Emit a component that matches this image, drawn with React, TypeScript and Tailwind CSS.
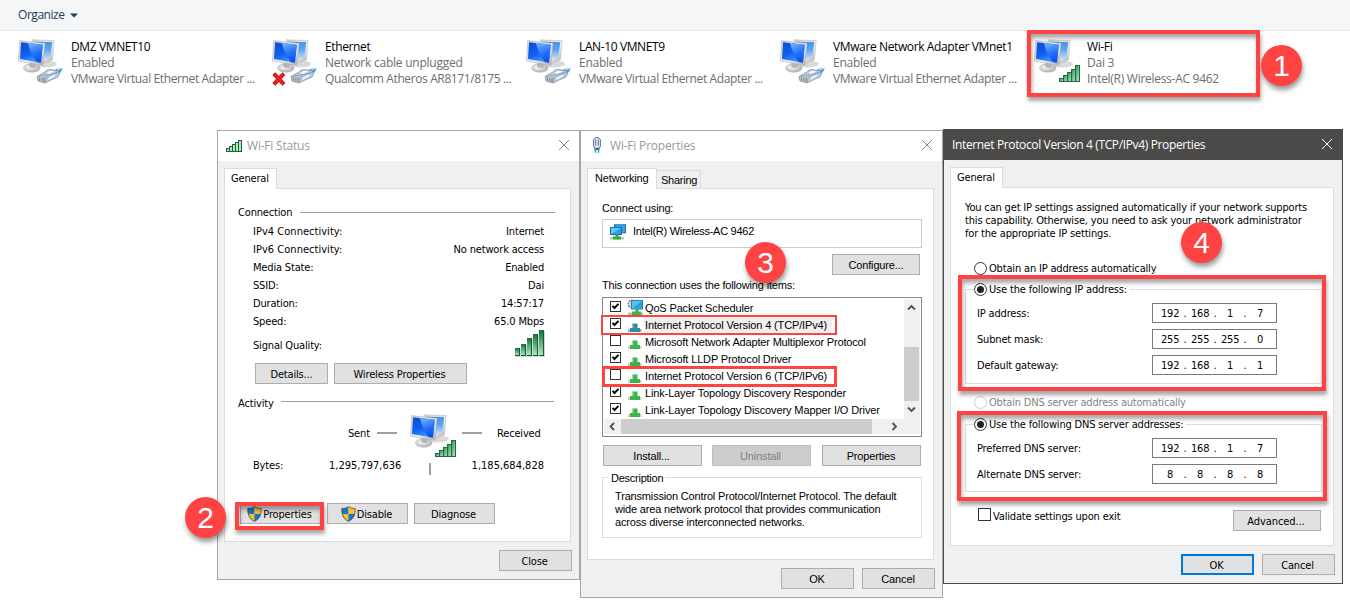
import type { ReactNode } from "react";

const tahoma = "font-['DejaVu_Sans_Condensed','DejaVu_Sans',sans-serif] text-[11px] tracking-[-0.17px] [font-stretch:condensed]";
const segoe = "font-['Open_Sans','Noto_Sans',sans-serif] text-[12px] [font-stretch:normal]";
const msSans = "font-['Liberation_Sans',Arial,sans-serif] text-[11px] tracking-[-0.15px]";

function Defs() {
  return (
    <svg className="absolute h-0 w-0" aria-hidden="true">
      <defs>
        <linearGradient id="screenFront" x1="0" y1="0" x2="0.4" y2="1">
          <stop offset="0" stopColor="#0b4fd6" />
          <stop offset="0.6" stopColor="#0f5ff0" />
          <stop offset="1" stopColor="#3c95ff" />
        </linearGradient>
        <linearGradient id="screenBack" x1="0" y1="0" x2="0" y2="1">
          <stop offset="0" stopColor="#1873e4" />
          <stop offset="1" stopColor="#b4dcff" />
        </linearGradient>
        <linearGradient id="gloss" x1="0" y1="0" x2="0.3" y2="1">
          <stop offset="0" stopColor="#7ab8ff" />
          <stop offset="0.6" stopColor="#2673fa" />
          <stop offset="1" stopColor="#0c55ea" />
        </linearGradient>
        <linearGradient id="bezel" x1="0" y1="0" x2="1" y2="1">
          <stop offset="0" stopColor="#d2d2d2" />
          <stop offset="0.6" stopColor="#ececec" />
          <stop offset="1" stopColor="#a6a6a6" />
        </linearGradient>
        <radialGradient id="base" cx="0.4" cy="0.4" r="0.6">
          <stop offset="0" stopColor="#ffffff" />
          <stop offset="1" stopColor="#b0b0b0" />
        </radialGradient>
        <linearGradient id="bar" x1="0" y1="0" x2="1" y2="1">
          <stop offset="0" stopColor="#2a8a50" />
          <stop offset="1" stopColor="#bfe8cc" />
        </linearGradient>
        <linearGradient id="barTall" x1="0" y1="0" x2="0" y2="1">
          <stop offset="0" stopColor="#11703a" />
          <stop offset="1" stopColor="#b5ecc6" />
        </linearGradient>
      </defs>
    </svg>
  );
}

function Bars() {
  return (
    <g stroke="#1f6b40" strokeWidth="1" fill="url(#bar)">
      <rect x="25.5" y="39.5" width="4" height="3" />
      <rect x="29.5" y="36.5" width="4" height="6" />
      <rect x="33.5" y="33.5" width="4" height="9" />
      <rect x="37.5" y="30.5" width="4" height="12" />
      <rect x="41.5" y="26.5" width="4" height="16" />
    </g>
  );
}

function Plug() {
  return (
    <g>
      <path d="M35 32 L39 29.8 L45 29 L43.5 32 L40 36Z" fill="#35a6d6" />
      <path d="M39 31 L45 29.2" stroke="#bfeaf7" strokeWidth="1" />
      <path d="M19 37.5 L27 33 L29 31 L33 30.5 L40 32 L42 34 L40 38 L33 41 L27 44 L20 42Z" fill="#bccbe2" stroke="#7f8fae" strokeWidth="0.8" />
      <path d="M20 37.5 L30 35.5 L41 33.5 M27 44 L28 38.5 L39 33.5" stroke="#7f8fae" strokeWidth="0.7" fill="none" />
      <path d="M28.5 34 L32 31.5 L36.5 32.5 L31 35Z" fill="#f5f9ff" />
      <path d="M21.5 38.5V41.5M23.8 38.5V42.5M26 38.5V43" stroke="#8f8a4c" strokeWidth="1.1" />
      <path d="M30.5 38.3 L37 35.3 L37 37.5 L30.5 41Z" fill="#e9f1fb" />
    </g>
  );
}

function Computers({ kind, broken }: { kind: "plug" | "bars"; broken?: boolean }) {
  return (
    <svg width="46" height="46" viewBox="0 0 46 46" className="shrink-0 overflow-visible" fill="none">
      <ellipse cx="28" cy="25" rx="11" ry="3.4" fill="#d9d9d9" />
      <path d="M14 0.8 L36.2 1.6 L34.4 20.8 L24 25Z" fill="url(#bezel)" stroke="#b4b4b4" strokeWidth="0.5" />
      <path d="M16.5 2.8 L34 3.2 L32.4 18.3 L25 19.5Z" fill="url(#screenBack)" />
      <path d="M25 3 L34 3.2 L33 13 C29 11 27 8 25 3Z" fill="#5fa7f2" opacity="0.6" />
      <ellipse cx="13.8" cy="29" rx="8.3" ry="4.2" fill="url(#base)" stroke="#b8b8b8" strokeWidth="0.6" />
      <path d="M11 23 L18 24.5 L17 29 L11.5 28.5Z" fill="#b4b4b4" />
      <path d="M1.7 1.6 L27 4.2 L24.8 26.3 L0.4 22Z" fill="url(#bezel)" stroke="#acacac" strokeWidth="0.5" />
      <path d="M3.1 3.3 L24.8 5.7 L22.9 23.7 L2 20Z" fill="url(#screenFront)" />
      <path d="M10 4.1 L24.8 5.7 L22.9 23.7 L18.5 22.9 C14 17 11.5 11 10 4.1Z" fill="url(#gloss)" />
      {kind === "plug" ? <Plug /> : <Bars />}
      {broken && (
        <>
          <path d="M3.2 36 L10.6 44 M10.6 36 L3.2 44" stroke="#b80606" strokeWidth="4" strokeLinecap="square" />
          <path d="M3.2 36 L10.6 44 M10.6 36 L3.2 44" stroke="#ee2222" strokeWidth="2.4" strokeLinecap="square" />
        </>
      )}
    </svg>
  );
}

function Adapter({ name, status, device, kind = "plug", broken }: { name: string; status: string; device: string; kind?: "plug" | "bars"; broken?: boolean }) {
  return (
    <div className="flex w-[254px] shrink-0 gap-[7px]">
      <Computers kind={kind} broken={broken} />
      <div className="whitespace-nowrap leading-4 text-[#6d6d6d]">
        <div className="text-black">{name}</div>
        <div className="tracking-[-0.24px]">{status}</div>
        <div className={kind === "bars" ? "tracking-[-0.28px]" : ""}>{device}</div>
      </div>
    </div>
  );
}

function CloseX({ color }: { color: string }) {
  return (
    <svg width="11" height="11" viewBox="0 0 11 11" stroke={color} strokeWidth="1" className="-mt-[2px] overflow-visible">
      <path d="M0 0 L10 10 M10 0 L0 10" />
    </svg>
  );
}

function Button({ children, className = "", variant = "normal" }: { children: ReactNode; className?: string; variant?: "normal" | "disabled" | "default" }) {
  const look =
    variant === "disabled"
      ? "border border-[#bfbfbf] bg-[#cccccc] text-[#838383]"
      : variant === "default"
        ? "border-2 border-[#0078d7] bg-[#e1e1e1]"
        : "border border-[#adadad] bg-[#e1e1e1]";
  return (
    <button className={`flex h-[21px] shrink-0 items-center justify-center whitespace-nowrap leading-[17px] ${look} ${className}`}>
      {children}
    </button>
  );
}

function Shield() {
  return (
    <svg width="15" height="16" viewBox="0 0 15 16" className="-ml-[2px] -mt-px mr-px">
      <path d="M7.5 0.5 C5.5 2 3 2.5 0.8 2.4 C0.6 8 2 12.5 7.5 15.5Z" fill="#1874cd" />
      <path d="M7.5 0.5 C9.5 2 12 2.5 14.2 2.4 C14.4 8 13 12.5 7.5 15.5Z" fill="#f9c02d" />
      <path d="M7.5 8 H1.1 C1.8 11.2 3.8 13.7 7.5 15.5Z" fill="#f9c02d" />
      <path d="M7.5 8 H13.9 C13.2 11.2 11.2 13.7 7.5 15.5Z" fill="#1874cd" />
      <path d="M7.5 0.6 C5.5 2 3 2.6 0.8 2.4 C0.6 8 2 12.5 7.5 15.4 C13 12.5 14.4 8 14.2 2.4 C12 2.6 9.5 2 7.5 0.6Z" fill="none" stroke="#4d5560" strokeWidth="0.9" />
    </svg>
  );
}

function StatusRow({ label, value }: { label: string; value?: string }) {
  return (
    <div className="flex h-[18px] items-center justify-between pt-[2px] leading-4">
      <span className={label.startsWith("IPv") ? "tracking-[0.03px]" : ""}>{label}</span>
      <span>{value}</span>
    </div>
  );
}

const status = [
  ["IPv4 Connectivity:", "Internet"],
  ["IPv6 Connectivity:", "No network access"],
  ["Media State:", "Enabled"],
  ["SSID:", "Dai"],
  ["Duration:", "14:57:17"],
  ["Speed:", "65.0 Mbps"],
];

function StatusDialog() {
  return (
    <section className={`flex h-[450px] w-[363px] shrink-0 flex-col border border-[#a6a6a6] bg-[#f0f0f0] ${tahoma}`}>
      <header className="flex h-[30px] shrink-0 items-center bg-white pl-2 pr-[9px] text-[#999]">
        <svg width="16" height="12" viewBox="0 0 16 12" fill="#9ff0b8" stroke="#2c5b3c" className="-mt-px">
          <rect x="0.5" y="8.5" width="3" height="3" />
          <rect x="3.5" y="6.5" width="3" height="5" />
          <rect x="6.5" y="4.5" width="3" height="7" />
          <rect x="9.5" y="2.5" width="3" height="9" />
          <rect x="12.5" y="0.5" width="3" height="11" />
        </svg>
        <h2 className={`ml-[5px] grow tracking-[-0.2px] ${segoe}`}>Wi-Fi Status</h2>
        <CloseX color="#8a8a8a" />
      </header>
      <div className="mx-[6px] mt-[7px] flex">
        <div className="z-10 -mb-px h-[21px] w-[53px] border border-b-0 border-[#dcdcdc] bg-white pl-[6px] leading-[19px]">General</div>
      </div>
      <div className="ml-[6px] flex h-[354px] w-[347px] shrink-0 flex-col border border-[#dcdcdc] bg-white pl-[13px] pr-[15px] pt-[15px]">
        <div className="flex h-4 items-center justify-between">
          <span className="pt-[2px]">Connection</span> <span className="h-px w-[255px] bg-[#a0a0a0]" />
        </div>
        <div className="ml-[15px] mr-[11px] mt-[2px]">
          {status.map(([l, v]) => <StatusRow key={l} label={l} value={v} />)}
          <div className="flex h-[27px] justify-between">
            <span className="mt-[8px] leading-4">Signal Quality:</span>
            <svg width="31" height="27" viewBox="0 0 31 27" className="-mr-px">
              <g fill="#c9d8cd">
                <rect x="2" y="19" width="5" height="8" />
                <rect x="8" y="15" width="5" height="12" />
                <rect x="14" y="9" width="5" height="18" />
                <rect x="20" y="5" width="5" height="22" />
                <rect x="26" y="1" width="5" height="26" />
              </g>
              <g fill="url(#barTall)">
                <rect x="1" y="18" width="5" height="8" />
                <rect x="7" y="14" width="5" height="12" />
                <rect x="13" y="8" width="5" height="18" />
                <rect x="19" y="4" width="5" height="22" />
                <rect x="25" y="0" width="5" height="26" />
              </g>
              <path d="M1 25.5H6M7 25.5H12M13 25.5H18M19 25.5H24M25 25.5H30M5.5 18V26M11.5 14V26M17.5 8V26M23.5 4V26M29.5 0V26" stroke="#125a30" />
            </svg>
          </div>
        </div>
        <div className="ml-[17px] mt-[6px] flex gap-[6px]">
          <Button className="w-[73px] pt-[2px]">Details...</Button>
          <Button className="w-[133px] pr-[2px] pt-[2px] tracking-[-0.12px]">Wireless Properties</Button>
        </div>
        <div className="mt-[11px] flex h-4 items-center justify-between">
          <span className="pt-[2px]">Activity</span> <span className="mb-[3px] mr-px h-px w-[273px] bg-[#a0a0a0]" />
        </div>
        <div className="mt-[3px] flex h-[46px] items-start pl-[110px]">
          <span className="mt-[12px] w-[29px] leading-4">Sent</span>
          <span className="mt-[18px] h-[2px] w-5 bg-[#a0a0a0]" />
          <span className="ml-[13px] mr-[6px] h-[46px] w-[46px]"><Computers kind="bars" /></span>
          <span className="mt-[18px] h-[2px] w-5 bg-[#a0a0a0]" />
          <span className="ml-[15px] mt-[12px] leading-4">Received</span>
        </div>
        <div className="-mt-[2px] ml-[15px] mr-[11px] flex h-4 items-center">
          <span className="w-[76px]">Bytes:</span>
          <span className="w-[100px] tracking-[0px]">1,295,797,636</span>
          <span className="mt-[5px] h-3 w-[2px] bg-[#a0a0a0]" />
          <span className="ml-auto tracking-[0px]">1,185,684,828</span>
        </div>
        <div className="ml-[2px] mt-[29px] flex gap-[6px]">
          <Button className="w-[81px] pt-[2px]"><Shield />Properties</Button>
          <Button className="w-[81px] pt-[2px]"><Shield />Disable</Button>
          <Button className="w-[81px] pr-[2px] pt-[2px]">Diagnose</Button>
        </div>
      </div>
      <Button className="ml-auto mr-[7px] mt-2 w-[73px] pr-[2px] pt-[2px]">Close</Button>
    </section>
  );
}

function Check({ on }: { on: boolean }) {
  return (
    <svg width="11" height="11" viewBox="0 0 11 11" className="mb-[2px] shrink-0">
      <rect x="0.5" y="0.5" width="10" height="10" fill="#fff" stroke="#333" />
      {on && <path d="M2.5 4.8 L4.5 7 L8.5 2.8" fill="none" stroke="#000" strokeWidth="1.9" />}
    </svg>
  );
}

function ProtocolIcon({ kind }: { kind: string }) {
  if (kind === "qos")
    return (
      <svg width="17" height="17" viewBox="0 0 17 17" className="shrink-0">
        <circle cx="5" cy="5" r="3.8" fill="#d6d6d6" stroke="#777" strokeWidth="1.6" strokeDasharray="1.6 1.2" />
        <rect x="4.5" y="1.5" width="11" height="8.5" fill="#55c0f5" stroke="#2a7fb5" />
        <path d="M5 9.5 L15 2 V9.5Z" fill="#2b9fe0" />
        <path d="M8.5 10h3v3h-3z" fill="#3fae49" />
        <path d="M1 13.5h15v2.5H1z" fill="#b8bcbc" />
        <path d="M5 12.5h9v3.5H5z" fill="#3bb54a" />
      </svg>
    );
  const green = kind === "v4" ? "#2d8f9b" : "#3bb54a";
  return (
    <svg width="17" height="17" viewBox="0 0 17 17" className="shrink-0">
      <path d="M1 13h13.5v3H1z" fill={kind === "v4" ? "#86bac0" : "#c9cfcb"} />
      <path d="M3 12h10v4H3z" fill={green} />
      <path d="M5.5 7.5h5v5h-5z" fill={green} />
      <path d="M5.5 7.5h1v5h-1z" fill={kind === "v4" ? "#7cc0c8" : "#8fd89a"} />
    </svg>
  );
}

const items = [
  { text: "QoS Packet Scheduler", on: true, kind: "qos", cls: "" },
  { text: "Internet Protocol Version 4 (TCP/IPv4)", on: true, kind: "v4", cls: "bg-[#f0f0f0] pr-[5px] tracking-[-0.13px]" },
  { text: "Microsoft Network Adapter Multiplexor Protocol", on: false, kind: "p", cls: "tracking-[-0.17px]" },
  { text: "Microsoft LLDP Protocol Driver", on: true, kind: "p", cls: "" },
  { text: "Internet Protocol Version 6 (TCP/IPv6)", on: false, kind: "p", cls: "tracking-[-0.13px]" },
  { text: "Link-Layer Topology Discovery Responder", on: true, kind: "p", cls: "tracking-[-0.14px]" },
  { text: "Link-Layer Topology Discovery Mapper I/O Driver", on: true, kind: "p", cls: "tracking-[-0.11px]" },
];

function Chevron({ d }: { d: string }) {
  return (
    <svg width="9" height="9" viewBox="0 0 9 9" fill="none" stroke="#505050" strokeWidth="1.8">
      <path d={d} />
    </svg>
  );
}

function PropertiesDialog() {
  return (
    <section className={`flex h-[468px] w-[363px] shrink-0 flex-col border border-[#a6a6a6] bg-[#f0f0f0] ${msSans}`}>
      <header className="flex h-[30px] shrink-0 items-center bg-white pl-[11px] pr-[9px] text-[#999]">
        <svg width="10" height="16" viewBox="0 0 10 16" className="-mt-[2px]">
          <path d="M3.5 0.6h3L8.6 2.6V9L7 11.4H3L1.4 9V2.6Z" fill="#d5e0ea" stroke="#667c90" />
          <path d="M3.6 2.5v6M6.4 2.5v6" stroke="#667c90" />
          <path d="M2.5 11h5v2h-5z" fill="#3a6f9c" />
          <path d="M3.5 12.5v3.3M6.5 12.5v3.3" stroke="#2ea3dc" strokeWidth="1.5" />
        </svg>
        <h2 className={`ml-[8px] grow tracking-[-0.2px] ${segoe}`}>Wi-Fi Properties</h2>
        <CloseX color="#8a8a8a" />
      </header>
      <div className="mx-[6px] mt-[7px] flex items-end">
        <div className="z-10 -mb-px h-[21px] w-[70px] border border-b-0 border-[#dcdcdc] bg-white pl-[7px] leading-[19px]">Networking</div>
        <div className="h-[18px] w-[44px] border border-b-0 border-l-0 border-[#dcdcdc] pl-[4px] leading-[18px] tracking-[-0.25px]">Sharing</div>
      </div>
      <div className="ml-[6px] flex h-[372px] w-[347px] shrink-0 flex-col border border-[#dcdcdc] bg-white px-[14px] pt-[11px]">
        <div className="h-4 leading-4">Connect using:</div>
        <div className="mt-[3px] flex h-[29px] w-[320px] items-start border border-[#ccc] pl-[7px] pt-1">
          <svg width="16" height="16" viewBox="0 0 16 16">
            <rect x="4.5" y="0.8" width="11" height="8" fill="#3aa6ea" stroke="#1c70a5" />
            <rect x="0.5" y="3.5" width="11" height="7" fill="#63c8fa" stroke="#1c70a5" />
            <path d="M1 10 L11 4 V10Z" fill="#2e9fe6" />
            <path d="M0 13h14v2.5H0z" fill="#c3c8c5" />
            <path d="M3 12.5h8v3H3zM5.5 10.5h3v3h-3z" fill="#2fae3c" />
          </svg>
          <span className="ml-[7px] leading-[14px] tracking-[-0.27px]">Intel(R) Wireless-AC 9462</span>
        </div>
        <Button className="-mr-px ml-auto mt-[6px] w-[88px] pt-[2px]">Configure...</Button>
        <div className="mt-[2px] h-4 leading-4 tracking-[-0.17px]">This connection uses the following items:</div>
        <div className="mt-[4px] flex h-[140px] w-[320px] shrink-0 flex-col border border-[#828790] p-px">
          <div className="flex h-[120px]">
            <ul className="w-[300px] overflow-hidden">
              {items.map((it) => (
                <li key={it.text} className="flex h-[17px] items-center whitespace-nowrap pl-[6px]">
                  <Check on={it.on} />
                  <span className="ml-[6px]"><ProtocolIcon kind={it.kind} /></span>
                  <span className={`h-[17px] pl-px pt-px leading-[17px] ${it.cls}`}>{it.text}</span>
                </li>
              ))}
            </ul>
            <div className="flex w-4 flex-col items-center bg-[#f0f0f0] pr-px pt-1">
              <Chevron d="M1 6.5 L4.5 3 L8 6.5" />
              <span className="mt-[35px] h-[54px] w-[15px] shrink-0 bg-[#cdcdcd]" />
              <span className="mt-[4px]"><Chevron d="M1 2.5 L4.5 6 L8 2.5" /></span>
            </div>
          </div>
          <div className="flex h-[15px] items-center bg-[#f0f0f0] pl-[4px]">
            <Chevron d="M6 1 L2.5 4.5 L6 8" />
            <span className="ml-[4px] h-[15px] w-[251px] bg-[#cdcdcd]" />
            <span className="ml-[18px]"><Chevron d="M2.5 1 L6 4.5 L2.5 8" /></span>
          </div>
        </div>
        <div className="ml-px mt-2 flex">
          <Button className="w-[99px] pr-[2px] pt-[2px]">Install...</Button>
          <Button variant="disabled" className="ml-[10px] w-[99px] pr-[2px] pt-[2px]">Uninstall</Button>
          <Button className="ml-[11px] w-[99px] pr-px pt-[2px]">Properties</Button>
        </div>
        <fieldset className="mt-[4px] h-[68px] w-[320px] shrink-0 border border-[#dcdcdc] pl-3">
          <legend className="-ml-[6px] px-[2px] pt-px leading-[14px] tracking-[-0.25px]">Description</legend>
          <p className="mt-[5px] whitespace-nowrap leading-[13px] tracking-[-0.17px]">
            Transmission Control Protocol/Internet Protocol. The default<br />
            wide area network protocol that provides communication<br />
            across diverse interconnected networks.
          </p>
        </fieldset>
      </div>
      <div className="mt-2 flex justify-end gap-2 pr-[7px]">
        <Button className="w-[73px] pr-px pt-[2px]">OK</Button>
        <Button className="w-[73px] pr-px pt-[2px]">Cancel</Button>
      </div>
    </section>
  );
}

function Radio({ children, on, dim }: { children: ReactNode; on?: boolean; dim?: boolean }) {
  return (
    <span className={`flex h-4 items-center gap-[2px] whitespace-nowrap ${dim ? "tracking-[-0.2px] text-[#838383]" : ""}`}>
      <svg width="13" height="13" viewBox="0 0 13 13">
        <circle cx="6.5" cy="6.5" r="6" fill="#fff" stroke={dim ? "#ccc" : "#333"} />
        {on && <circle cx="6.5" cy="6.5" r="3.5" fill="#222" />}
      </svg>
      <span className="pt-px leading-[15px]">{children}</span>
    </span>
  );
}

function AddressRow({ label, parts }: { label: string; parts: string[] }) {
  return (
    <div className="mb-[6px] flex h-5 items-center">
      <span className="w-[175px] pt-px leading-4">{label}</span>
      <span className="flex h-5 w-[125px] items-center border border-[#7a7a7a] bg-white pl-[8px] pt-px">
        {parts.map((p, i) => (
          <span key={i} className="flex leading-4">
            <span className="w-[18px] text-center">{p}</span>
            {i < 3 && <span className="w-3 text-center">.</span>}
          </span>
        ))}
      </span>
    </div>
  );
}

function Ipv4Dialog() {
  return (
    <section className={`-mt-px flex h-[455px] w-[400px] shrink-0 flex-col border border-[#4b4a48] bg-[#f0f0f0] ${tahoma}`}>
      <header className="flex h-[30px] shrink-0 items-center bg-[#4b4a48] pl-2 pr-[9px] text-white">
        <h2 className={`grow tracking-[-0.36px] ${segoe}`}>Internet Protocol Version 4 (TCP/IPv4) Properties</h2>
        <CloseX color="#fff" />
      </header>
      <div className="mx-[6px] mt-[7px] flex">
        <div className="z-10 -mb-px h-[21px] w-[53px] border border-b-0 border-[#dcdcdc] bg-white pl-[6px] leading-[19px]">General</div>
      </div>
      <div className="ml-[6px] flex h-[359px] w-[384px] shrink-0 flex-col border border-[#dcdcdc] bg-white px-[14px] pt-[13px]">
        <p className="whitespace-nowrap leading-[13px]">
          You can get IP settings assigned automatically if your network supports<br />
          this capability. Otherwise, you need to ask your network administrator<br />
          for the appropriate IP settings.
        </p>
        <div className="ml-[9px] mt-[20px]"><Radio>Obtain an IP address automatically</Radio></div>
        <fieldset className="mt-[5px] h-[103px] w-[357px] shrink-0 border border-[#dcdcdc] pl-[11px]">
          <legend className="-ml-[3px] pr-[3px]"><Radio on>Use the following IP address:</Radio></legend>
          <div className="mt-[6px]">
            <AddressRow label="IP address:" parts={["192", "168", "1", "7"]} />
            <AddressRow label="Subnet mask:" parts={["255", "255", "255", "0"]} />
            <AddressRow label="Default gateway:" parts={["192", "168", "1", "1"]} />
          </div>
        </fieldset>
        <div className="ml-[9px] mt-[10px]"><Radio dim>Obtain DNS server address automatically</Radio></div>
        <fieldset className="mt-[6px] h-[76px] w-[357px] shrink-0 border border-[#dcdcdc] pl-[11px]">
          <legend className="-ml-[3px] pr-[3px]"><Radio on>Use the following DNS server addresses:</Radio></legend>
          <div className="mt-[6px]">
            <AddressRow label="Preferred DNS server:" parts={["192", "168", "1", "7"]} />
            <AddressRow label="Alternate DNS server:" parts={["8", "8", "8", "8"]} />
          </div>
        </fieldset>
        <div className="-mr-[2px] ml-[13px] mt-[16px] flex items-start">
          <span className="h-[13px] w-[13px] border border-[#333] bg-white" />
          <span className="ml-[2px] pt-px leading-[15px]">Validate settings upon exit</span>
          <Button className="ml-auto mt-[2px] w-[88px] pr-[2px] pt-[2px] tracking-[-0.05px]">Advanced...</Button>
        </div>
      </div>
      <div className="mt-2 flex justify-end gap-2 pr-[7px]">
        <Button variant="default" className="w-[73px] pr-[2px] pt-[2px]">OK</Button>
        <Button className="w-[73px] pr-[2px] pt-[2px]">Cancel</Button>
      </div>
    </section>
  );
}

function Badge({ n, className }: { n: number; className: string }) {
  return (
    <div className={`absolute z-20 flex h-[41px] w-[41px] items-center justify-center rounded-full bg-[#ff4343] font-['Liberation_Sans',Arial,sans-serif] text-[30px] leading-none text-white shadow-[1px_4px_5px_rgba(0,0,0,0.4)] ${className}`}>
      {n}
    </div>
  );
}

function Frame({ className }: { className: string }) {
  return <div className={`absolute z-10 border-[#ff4343] ${className}`} />;
}

const lifted = "border-4 shadow-[1px_4px_4px_rgba(0,0,0,0.35),inset_1px_4px_4px_rgba(0,0,0,0.35)]";

export default function App() {
  return (
    <main className="relative h-[600px] w-[1350px] overflow-hidden bg-white text-black">
      <Defs />
      <nav className={`flex h-[31px] items-center gap-[5px] border-b border-[#e3e7eb] bg-[#f5f6f7] pl-[18px] text-[#1e395b] tracking-[-0.45px] ${segoe}`}>
        Organize
        <svg width="8" height="5" viewBox="0 0 8 5"><path d="M0 0.5H8L4 4.5Z" fill="#1e395b" /></svg>
      </nav>
      <div className={`flex h-[99px] pl-[18px] pt-2 tracking-[-0.38px] ${segoe}`}>
        <Adapter name="DMZ VMNET10" status="Enabled" device="VMware Virtual Ethernet Adapter ..." />
        <Adapter name="Ethernet" status="Network cable unplugged" device="Qualcomm Atheros AR8171/8175 ..." broken />
        <Adapter name="LAN-10 VMNET9" status="Enabled" device="VMware Virtual Ethernet Adapter ..." />
        <Adapter name="VMware Network Adapter VMnet1" status="Enabled" device="VMware Virtual Ethernet Adapter ..." />
        <Adapter name="Wi-Fi" status="Dai 3" device="Intel(R) Wireless-AC 9462" kind="bars" />
      </div>
      <div className="flex items-start pl-[217px]">
        <StatusDialog />
        <PropertiesDialog />
        <Ipv4Dialog />
      </div>
      <Frame className={`left-[1027px] top-[30px] h-[67px] w-[233px] ${lifted}`} />
      <Frame className={`left-[235px] top-[502px] h-[28px] w-[89px] ${lifted}`} />
      <Frame className="left-[601px] top-[315px] h-[20px] w-[236px] border-2" />
      <Frame className="left-[602px] top-[366px] h-[21px] w-[235px] border-[3px]" />
      <Frame className={`left-[958px] top-[275px] h-[116px] w-[368px] ${lifted}`} />
      <Frame className={`left-[957px] top-[411px] h-[90px] w-[370px] ${lifted}`} />
      <Badge n={1} className="left-[1261px] top-[45px]" />
      <Badge n={2} className="left-[185px] top-[497px]" />
      <Badge n={3} className="left-[745px] top-[242px]" />
      <Badge n={4} className="left-[1181px] top-[222px]" />
    </main>
  );
}
